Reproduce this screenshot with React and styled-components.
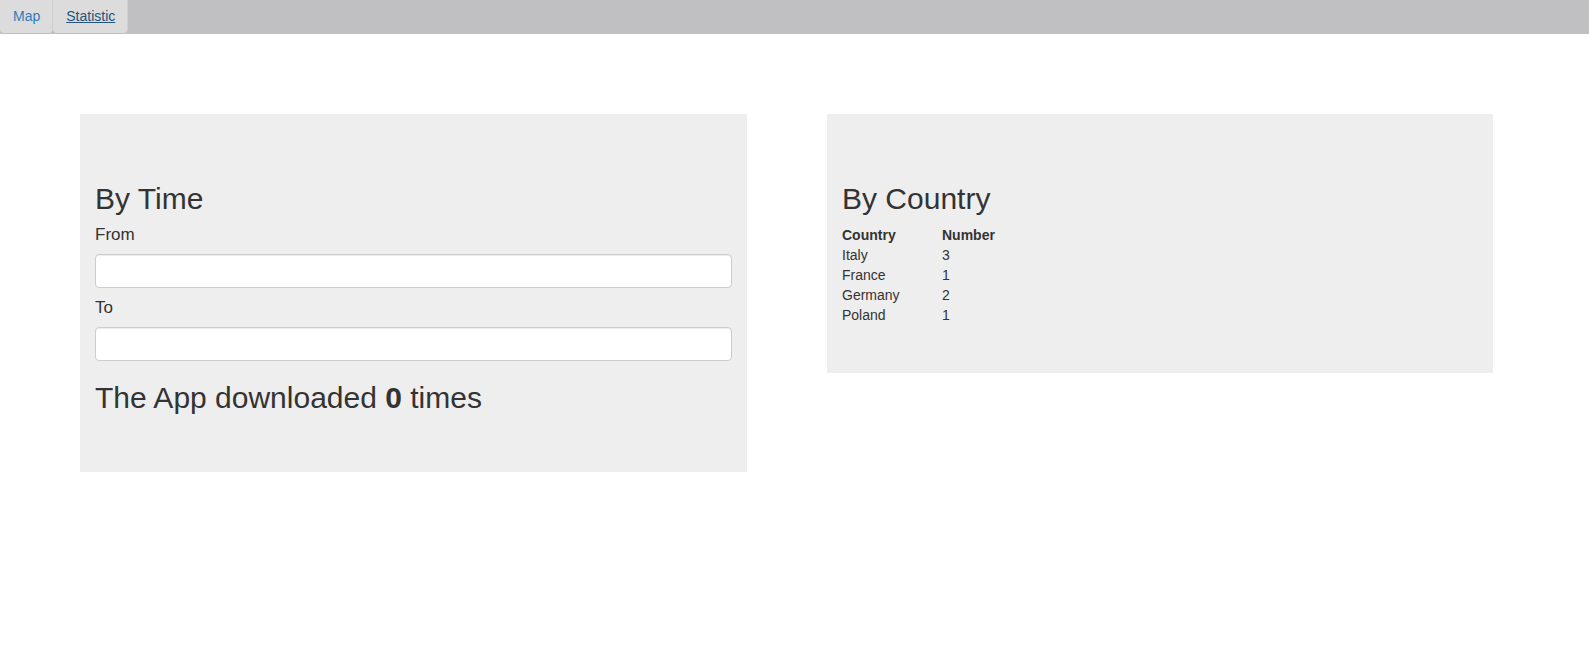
import styled, { createGlobalStyle } from 'styled-components';

const GlobalStyle = createGlobalStyle`
	body {
		margin: 0;
		font-family: 'Liberation Sans', Arial, sans-serif;
		font-size: 14px;
		line-height: 1.42857;
		color: #333;
		background: #fff;
	}
`;

const Navbar = styled.nav`
	display: flex;
	height: 34px;
	background-color: #c0c0c2;
`;

const Tab = styled.a`
	display: flex;
	align-items: center;
	height: 33px;
	padding: 0 12px 0 13px;
	background-color: #dcdcdc;
	border-right: 1px solid #cfcfcf;
	border-radius: 0 0 4px 4px;
	font-size: 14px;
	color: ${(p) => (p.$active ? '#23527c' : '#337ab7')};
	text-decoration: ${(p) => (p.$active ? 'underline' : 'none')};
	cursor: pointer;
`;

const Content = styled.main`
	display: flex;
	align-items: flex-start;
	gap: 80px;
	padding: 80px 0 0 80px;
`;

const Jumbotron = styled.section`
	width: ${(p) => p.$width}px;
	box-sizing: border-box;
	padding: 48px 15px;
	background-color: #eee;
`;

const Heading = styled.h2`
	margin: 20px 0 10px;
	font-size: 30px;
	font-weight: 500;
	line-height: 1.1;
`;

const Label = styled.label`
	display: block;
	margin: ${(p) => p.$top}px 0 9px;
	font-size: 17px;
	line-height: 20px;
`;

const Input = styled.input`
	display: block;
	width: 100%;
	height: 34px;
	box-sizing: border-box;
	padding: 6px 12px;
	border: 1px solid #ccc;
	border-radius: 4px;
	background: #fff;
	box-shadow: inset 0 1px 1px rgba(0, 0, 0, 0.075);
	font-size: 14px;
`;

const Table = styled.table`
	border-collapse: collapse;
	font-size: 14px;

	& th,
	& td {
		padding: 0;
		height: 20px;
		text-align: left;
		line-height: 20px;
	}

	& th:first-child,
	& td:first-child {
		width: 100px;
	}
`;

const countries = [
	{ name: 'Italy', number: 3 },
	{ name: 'France', number: 1 },
	{ name: 'Germany', number: 2 },
	{ name: 'Poland', number: 1 },
];

export default function App() {
	return (
		<>
			<GlobalStyle />
			<Navbar>
				<Tab>Map</Tab>
				<Tab $active>Statistic</Tab>
			</Navbar>
			<Content>
				<Jumbotron $width={667}>
					<Heading>By Time</Heading>
					<Label $top={0}>From</Label>
					<Input type="text" />
					<Label $top={10}>To</Label>
					<Input type="text" />
					<Heading>
						The App downloaded <b>0</b> times
					</Heading>
				</Jumbotron>
				<Jumbotron $width={666}>
					<Heading>By Country</Heading>
					<Table>
						<thead>
							<tr>
								<th>Country</th>
								<th>Number</th>
							</tr>
						</thead>
						<tbody>
							{countries.map(({ name, number }) => (
								<tr key={name}>
									<td>{name}</td>
									<td>{number}</td>
								</tr>
							))}
						</tbody>
					</Table>
				</Jumbotron>
			</Content>
		</>
	);
}
